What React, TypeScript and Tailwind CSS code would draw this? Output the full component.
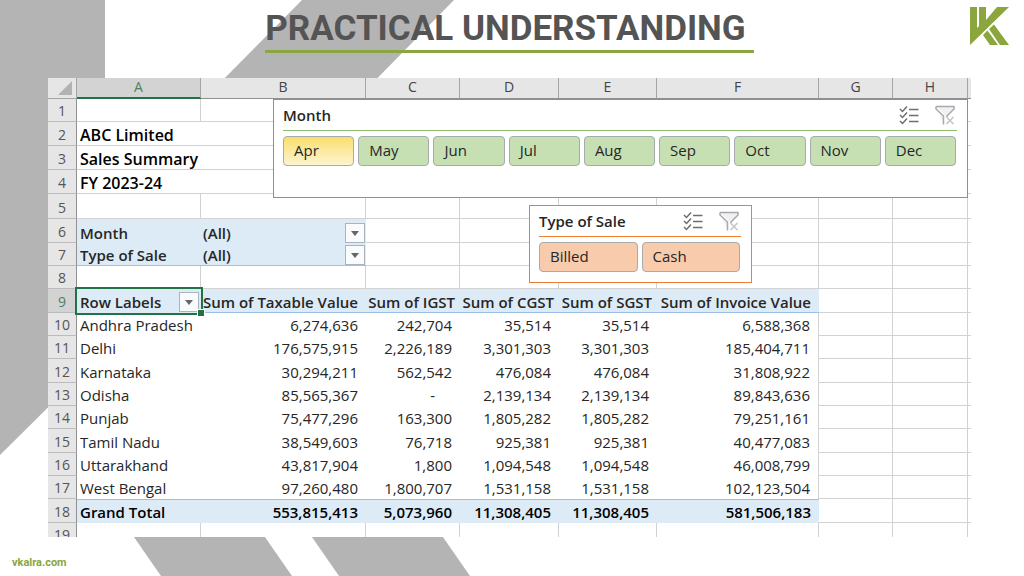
import React from 'react';
import clsx from 'clsx';

interface PivotRow {
  label: string;
  values: string[];
}

const columns = [
  { name: 'A', width: 'w-[124px]' },
  { name: 'B', width: 'w-[165px]' },
  { name: 'C', width: 'w-[94px]' },
  { name: 'D', width: 'w-[99px]' },
  { name: 'E', width: 'w-[98px]' },
  { name: 'F', width: 'w-[162px]' },
  { name: 'G', width: 'w-[74px]' },
  { name: 'H', width: 'w-[75px]' },
];

const titles = ['ABC Limited', 'Sales Summary', 'FY 2023-24'];

const filters = ['Month', 'Type of Sale'];

const measures = ['Sum of Taxable Value', 'Sum of IGST', 'Sum of CGST', 'Sum of SGST', 'Sum of Invoice Value'];

const pivotRows: PivotRow[] = [
  { label: 'Andhra Pradesh', values: ['6,274,636', '242,704', '35,514', '35,514', '6,588,368'] },
  { label: 'Delhi', values: ['176,575,915', '2,226,189', '3,301,303', '3,301,303', '185,404,711'] },
  { label: 'Karnataka', values: ['30,294,211', '562,542', '476,084', '476,084', '31,808,922'] },
  { label: 'Odisha', values: ['85,565,367', '-', '2,139,134', '2,139,134', '89,843,636'] },
  { label: 'Punjab', values: ['75,477,296', '163,300', '1,805,282', '1,805,282', '79,251,161'] },
  { label: 'Tamil Nadu', values: ['38,549,603', '76,718', '925,381', '925,381', '40,477,083'] },
  { label: 'Uttarakhand', values: ['43,817,904', '1,800', '1,094,548', '1,094,548', '46,008,799'] },
  { label: 'West Bengal', values: ['97,260,480', '1,800,707', '1,531,158', '1,531,158', '102,123,504'] },
];

const grandTotal = ['553,815,413', '5,073,960', '11,308,405', '11,308,405', '581,506,183'];

const months = ['Apr', 'May', 'Jun', 'Jul', 'Aug', 'Sep', 'Oct', 'Nov', 'Dec'];

const line = 'border-b border-r border-[#d2d2d2]';

const Backdrop = () => (
  <svg className="absolute inset-0 h-full w-full" viewBox="0 0 1024 576" preserveAspectRatio="xMinYMin slice" fill="#b4b4b4" aria-hidden="true">
    <path d="M0 0H105V351L0 455Z" />
    <path d="M302 0H454L354 102H201Z" />
    <path d="M127 527H258L292 576H161Z" />
    <path d="M305 527H436L470 576H339Z" />
  </svg>
);

const Logo = () => (
  <svg className="h-[38px] w-[39px]" viewBox="0 0 39 38" fill="#8ba63c" role="img" aria-label="VK">
    <path d="M0 0H7V21L9 19V0H16V13L27 0H39L0 38Z" />
    <path d="M13 28L17.5 23.5L28 38H20Z" />
    <path d="M19 22L24 17.5L39 38H30Z" />
  </svg>
);

const MultiSelectIcon = () => (
  <svg width="20" height="20" viewBox="0 0 20 20" fill="none" stroke="#6e6e6e" strokeWidth="1.5">
    <path d="M1 4L3.5 6.5L8 1.500M1 10L3.500 12.500L8 7.500M1 16L3.500 18.500L8 13.500" />
    <path d="M10 4.500H19.500M10 10.500H19.500M10 16.500H19.500" />
  </svg>
);

const ClearFilterIcon = () => (
  <svg width="20" height="20" viewBox="0 0 20 20" fill="none" strokeWidth="1.5">
    <path d="M1 1.500H19V4L12 11V12M8.500 19.500V11L1 4V1.500" fill="#f0f0f4" stroke="#a9a9ad" />
    <path d="M11.500 12L18.500 19M18.500 12L11.500 19" stroke="#c4c4c8" />
  </svg>
);

const DropButton = ({ label }: { label: string }) => (
  <button aria-label={label} className="flex size-5 shrink-0 items-center justify-center border border-[#a9b4c0] bg-[#fafbfd]">
    <svg width="8" height="5" viewBox="0 0 8 5" fill="#666">
      <path d="M0 0H8L4 5Z" />
    </svg>
  </button>
);

interface SlicerProps {
  title: string;
  items: string[];
  selected?: string;
  frame: string;
  rule: string;
  grid: string;
  tile: string;
}

const Slicer: React.FC<SlicerProps> = ({ title, items, selected, frame, rule, grid, tile }) => (
  <section className={clsx('absolute bg-white pr-[10px] pl-[9px]', frame)}>
    <div className={clsx('flex h-[31px] items-center border-b', rule)}>
      <h2 className="flex-1 font-semibold">{title}</h2>
      <div className="flex gap-4 pr-[2px]">
        <button aria-label="Multi-Select"><MultiSelectIcon /></button>
        <button aria-label="Clear Filter"><ClearFilterIcon /></button>
      </div>
    </div>
    <div className={clsx('mt-[5px] grid gap-1 pr-px', grid)}>
      {items.map((item) => (
        <button
          key={item}
          className={clsx(
            'h-[30px] rounded-[4px] border border-[#a6abab] pb-[2px] pl-[10px] text-left',
            item === selected ? 'bg-linear-to-b from-[#f9df68] to-[#fdf3cf]' : tile,
          )}
        >
          {item}
        </button>
      ))}
    </div>
  </section>
);

const RowHead = ({ n, active }: { n: number; active?: boolean }) => (
  <th
    scope="row"
    className={clsx(
      'border-r border-b border-r-[#909090] border-b-[#bcbcbc] text-center text-[14px] font-normal',
      active ? 'bg-[#d3d3d3] text-[#4f7f63]' : 'bg-[#e6e6e6] text-[#555]',
    )}
  >
    {n}
  </th>
);

const Blanks = ({ count }: { count: number }) => (
  <>
    {Array.from({ length: count }, (_, i) => (
      <td key={i} className={line} />
    ))}
  </>
);

// columns G and H plus the cut-off one that follows
const Tail = () => (
  <>
    <Blanks count={2} />
    <td className="border-b border-[#d2d2d2]" />
  </>
);

const Sheet = () => (
  <table className="w-full table-fixed border-separate border-spacing-0 bg-white leading-5 whitespace-nowrap">
    <colgroup>
      <col className="w-[29px]" />
      {columns.map((c) => <col key={c.name} className={c.width} />)}
      <col className="w-[3px]" />
    </colgroup>
    <thead>
      <tr className="h-[21px] bg-[#e6e6e6] text-[14px] text-[#444]">
        <td className="border-r border-b border-[#a5a5a5]">
          <svg className="mr-1 ml-auto" width="14" height="14" viewBox="0 0 14 14" fill="#b2b2b2">
            <path d="M14 0V14H0Z" />
          </svg>
        </td>
        {columns.map((c) => (
          <th
            key={c.name}
            scope="col"
            className={clsx(
              'border-r border-r-[#a5a5a5] pb-[2px] leading-4 font-normal',
              c.name === 'A' ? 'border-b-2 border-b-[#217346] bg-[#d3d3d3] text-[#4f7f63]' : 'border-b border-b-[#909090]',
            )}
          >
            {c.name}
          </th>
        ))}
        <td className="border-b border-[#909090]" />
      </tr>
    </thead>
    <tbody className="align-bottom">
      <tr className="h-[23px]">
        <RowHead n={1} />
        <Blanks count={6} />
        <Tail />
      </tr>
      {titles.map((t, i) => (
        <tr key={t} className="h-[24px]">
          <RowHead n={i + 2} />
          <td colSpan={2} className={clsx(line, 'pl-[3px] text-[16px] leading-5 font-semibold text-black')}>{t}</td>
          <Blanks count={4} />
          <Tail />
        </tr>
      ))}
      <tr className="h-[25px]">
        <RowHead n={5} />
        <Blanks count={6} />
        <Tail />
      </tr>
      {filters.map((f, i) => (
        <tr key={f} className={i === 0 ? 'h-[24px]' : 'h-[23px]'}>
          <RowHead n={i + 6} />
          <td className={clsx('bg-[#ddebf7] pl-[3px] font-semibold', i === 1 && 'border-b border-[#9bc2e6]')}>{f}</td>
          <td className={clsx('bg-[#ddebf7] pr-px pl-[2px] font-semibold', i === 1 && 'border-b border-[#9bc2e6]')}>
            <div className="flex items-center justify-between">
              (All)
              <DropButton label={`Filter ${f}`} />
            </div>
          </td>
          <Blanks count={4} />
          <Tail />
        </tr>
      ))}
      <tr className="h-[23px]">
        <RowHead n={8} />
        <Blanks count={6} />
        <Tail />
      </tr>
      <tr className="h-[24px] font-semibold">
        <RowHead n={9} active />
        <td className="relative bg-[#ddebf7] pr-[2px] pb-px pl-[3px] outline-2 outline-[#217346]">
          <div className="flex items-center justify-between">
            Row Labels
            <DropButton label="Filter Row Labels" />
          </div>
          <span className="absolute -right-1 -bottom-1 box-content size-[6px] border border-white bg-[#217346]" />
        </td>
        {measures.map((m, c) => (
          <td
            key={m}
            className={clsx('border-b border-[#9bc2e6] bg-[#ddebf7] text-right', c === 0 || c === 4 ? 'pr-2' : 'pr-[5px]')}
          >
            {m}
          </td>
        ))}
        <Tail />
      </tr>
      {pivotRows.map((r, i) => (
        <tr key={r.label} className={i % 3 === 2 ? 'h-[24px]' : 'h-[23px]'}>
          <RowHead n={i + 10} />
          <td className="pb-px pl-[3px]">{r.label}</td>
          {r.values.map((v, c) => (
            <td key={c} className={clsx('pb-px text-right', v === '-' ? 'pr-[25px]' : 'pr-2', c === 4 && 'border-r border-[#d2d2d2]')}>{v}</td>
          ))}
          <Tail />
        </tr>
      ))}
      <tr className="h-[24px] bg-[#ddebf7] font-semibold text-black">
        <RowHead n={18} />
        <td className="border-t border-[#9bc2e6] pb-px pl-[3px]">Grand Total</td>
        {grandTotal.map((v, c) => (
          <td key={c} className="border-t border-[#9bc2e6] pr-2 pb-px text-right">{v}</td>
        ))}
        <td className={clsx(line, 'bg-white')} />
        <td className={clsx(line, 'bg-white')} />
        <td className="border-b border-[#d2d2d2] bg-white" />
      </tr>
      <tr>
        <th scope="row" className="border-r border-[#909090] bg-[#e6e6e6] text-[14px] font-normal text-[#555]">
          <div className="h-[14px] overflow-hidden pt-[2px]">19</div>
        </th>
        {columns.map((c) => <td key={c.name} className="border-r border-[#d2d2d2]" />)}
        <td />
      </tr>
    </tbody>
  </table>
);

export default function App() {
  return (
    <div className="relative flex min-h-screen flex-col overflow-hidden bg-white">
      <Backdrop />
      <header className="relative grid h-[78px] grid-cols-[1fr_auto_1fr] items-start pt-[7px] pr-[15px] pl-[10px] font-['Roboto',sans-serif]">
        <h1 className="col-start-2 border-b-[3px] border-[#8aa640] pr-2 text-[35px] leading-[43px] font-bold text-[#545454]">
          PRACTICAL UNDERSTANDING
        </h1>
        <div className="justify-self-end"><Logo /></div>
      </header>
      <main className="relative mr-[53px] ml-12 font-['Open_Sans',sans-serif] text-[15px] text-[#262626]">
        <Sheet />
        <Slicer
          title="Month"
          items={months}
          selected="Apr"
          frame="top-[21px] right-[3px] left-[225px] h-[99px] border border-[#70ad47]"
          rule="border-[#8fc06d]"
          grid="grid-cols-9"
          tile="bg-[#c6e0b4]"
        />
        <Slicer
          title="Type of Sale"
          items={['Billed', 'Cash']}
          frame="top-[127px] left-[481px] h-[78px] w-[223px] border border-[#ed7d31]"
          rule="border-[#ed7d31]"
          grid="grid-cols-2"
          tile="bg-[#f8cbad]"
        />
      </main>
      <footer className="relative mt-auto px-3 pb-[5px] font-['Roboto',sans-serif] text-[11px] leading-4 font-bold">
        <a href="#" className="text-[#8aa640]">vkalra.com</a>
      </footer>
    </div>
  );
}
